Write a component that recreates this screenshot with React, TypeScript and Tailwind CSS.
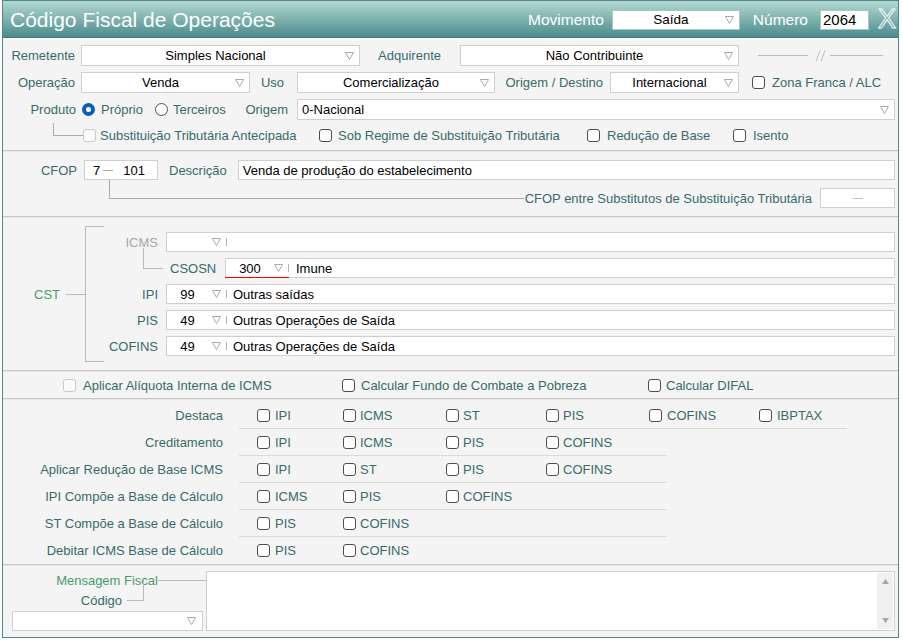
import React from "react";

function Arrow({ className = "" }: { className?: string }) {
  return (
    <svg width="9" height="8" viewBox="0 0 9 8" className={"shrink-0 " + className}>
      <path d="M0.5 0.5 H8.5 L4.5 7.5 Z" fill="none" stroke="#a9a9a9" strokeWidth="1" />
    </svg>
  );
}

function Box({ disabled }: { disabled?: boolean }) {
  return (
    <span
      className={
        disabled
          ? "block w-[13px] h-[13px] shrink-0 rounded-[3px] border border-[#c9c9c9] bg-[#fafafa]"
          : "block w-[13px] h-[13px] shrink-0 rounded-[3px] border border-[#4d4d4d] bg-white"
      }
    />
  );
}

function Radio({ on }: { on?: boolean }) {
  return on ? (
    <span className="w-[13px] h-[13px] shrink-0 rounded-full bg-[#0a5cc2] flex items-center justify-center">
      <span className="w-[5px] h-[5px] rounded-full bg-white" />
    </span>
  ) : (
    <span className="w-[13px] h-[13px] shrink-0 rounded-full border border-[#505050] bg-white" />
  );
}

function Sel({ w, text }: { w: string; text: string }) {
  return (
    <div className={w + " h-[21px] shrink-0 bg-white border border-[#cfcfcf] flex items-center pl-1 pr-[5px]"}>
      <span className="flex-1 text-center text-black whitespace-nowrap">{text}</span>
      <Arrow />
    </div>
  );
}

function CstField({ code, desc }: { code: string; desc: string }) {
  return (
    <div className="ml-[8px] flex-1 h-[20px] bg-white border border-[#cfcfcf] flex items-center text-black">
      <span className="w-[41px] text-center">{code}</span>
      <Arrow className="ml-[4px]" />
      <span className="ml-[5px] w-px h-[8px] bg-[#b5b5b5]" />
      <span className="ml-[6px]">{desc}</span>
    </div>
  );
}

function Sep() {
  return <div className="h-[2px] shrink-0 border-t border-[#c8c8c8] bg-[#e6e6e6]" />;
}

const rowsE: { label: string; items: string[] }[] = [
  { label: "Destaca", items: ["IPI", "ICMS", "ST", "PIS", "COFINS", "IBPTAX"] },
  { label: "Creditamento", items: ["IPI", "ICMS", "PIS", "COFINS"] },
  { label: "Aplicar Redução de Base ICMS", items: ["IPI", "ST", "PIS", "COFINS"] },
  { label: "IPI Compõe a Base de Cálculo", items: ["ICMS", "PIS", "COFINS"] },
  { label: "ST Compõe a Base de Cálculo", items: ["PIS", "COFINS"] },
  { label: "Debitar ICMS Base de Cálculo", items: ["PIS", "COFINS"] },
];
const cellW = ["w-[86px]", "w-[103px]", "w-[100px]", "w-[103px]", "w-[110px]", "w-[80px]"];
const gapW = ["ml-[5px]", "ml-[4px]", "ml-[4px]", "ml-[4px]", "ml-[5px]", "ml-[5px]"];

export default function App() {
  return (
    <div className="w-[903px] h-[640px] bg-white font-['Liberation_Sans',Arial,sans-serif] text-[13px] leading-none text-[#386a6b]">
      <div className="ml-[2px] w-[897px] h-[638px] border border-[#4f8788] bg-[#f4f4f4] flex flex-col overflow-hidden">
        {/* Header */}
        <div className="h-[37px] shrink-0 border-b border-[#3f7778] bg-[linear-gradient(to_bottom,#b3d8d1,#4b8c8d)] flex items-center pl-[7px] pr-[2px] pt-px">
          <span className="text-[21px] text-white whitespace-nowrap">Código Fiscal de Operações</span>
          <span className="ml-auto text-[15.5px] text-white">Movimento</span>
          <div className="ml-[8px] w-[128px] h-[20px] bg-white border border-[#a9c5c5] flex items-center pl-1 pr-[5px]">
            <span className="flex-1 text-center text-black text-[13.5px]">Saída</span>
            <Arrow />
          </div>
          <span className="ml-[13px] text-[15.5px] text-white">Número</span>
          <div className="ml-[12px] w-[49px] h-[20px] bg-white border border-[#a9c5c5] flex items-center pl-[2px] text-[15px] text-black">
            2064
          </div>
          <span className="ml-[9px] text-[27px] leading-none text-transparent [-webkit-text-stroke:1px_#f2fbf9]">X</span>
        </div>
        <div className="h-px shrink-0 bg-white" />

        {/* Section A */}
        <div className="h-[111px] shrink-0 pt-[3px] flex flex-col">
          <div className="h-[27px] flex items-center">
            <span className="w-[72px] text-right">Remetente</span>
            <Sel w="ml-[6px] w-[279px]" text="Simples Nacional" />
            <span className="w-[81px] text-right">Adquirente</span>
            <Sel w="ml-[19px] w-[279px]" text="Não Contribuinte" />
            <div className="ml-[19px] w-[50px] h-px bg-[#b9b9b9]" />
            <svg className="ml-[7px] shrink-0" width="11" height="12" viewBox="0 0 11 12">
              <path d="M1 11.5 L5 0.5 M6 11.5 L10 0.5" stroke="#bdbdbd" strokeWidth="1" fill="none" />
            </svg>
            <div className="ml-[4px] w-[53px] h-px bg-[#b9b9b9]" />
          </div>
          <div className="h-[27px] flex items-center">
            <span className="w-[72px] text-right">Operação</span>
            <Sel w="ml-[6px] w-[169px]" text="Venda" />
            <span className="w-[34px] text-right">Uso</span>
            <Sel w="ml-[13px] w-[198px]" text="Comercialização" />
            <span className="w-[108px] text-right">Origem / Destino</span>
            <Sel w="ml-[7px] w-[129px]" text="Internacional" />
            <span className="ml-[13px]">
              <Box />
            </span>
            <span className="ml-[7px]">Zona Franca / ALC</span>
          </div>
          <div className="h-[27px] flex items-center pr-[3px]">
            <span className="w-[73px] text-right">Produto</span>
            <div className="ml-[6px] w-[73px] flex items-center">
              <Radio on />
              <span className="ml-[6px]">Próprio</span>
            </div>
            <div className="w-[80px] flex items-center">
              <Radio />
              <span className="ml-[5px]">Terceiros</span>
            </div>
            <span className="w-[53px] text-right">Origem</span>
            <div className="ml-[9px] flex-1 h-[21px] bg-white border border-[#cfcfcf] flex items-center pl-[4px] pr-[5px]">
              <span className="flex-1 text-black">0-Nacional</span>
              <Arrow />
            </div>
          </div>
          <div className="h-[25px] flex items-center">
            <div className="ml-[50px] w-[30px] h-[13px] self-start border-l border-b border-[#a9a9a9]" />
            <div className="w-[236px] flex items-center">
              <Box disabled />
              <span className="ml-[4px] whitespace-nowrap">Substituição Tributária Antecipada</span>
            </div>
            <div className="w-[268px] flex items-center">
              <Box />
              <span className="ml-[6px] whitespace-nowrap">Sob Regime de Substituição Tributária</span>
            </div>
            <div className="w-[146px] flex items-center">
              <Box />
              <span className="ml-[7px]">Redução de Base</span>
            </div>
            <div className="flex items-center">
              <Box />
              <span className="ml-[7px]">Isento</span>
            </div>
          </div>
        </div>
        <Sep />

        {/* Section B */}
        <div className="h-[64px] shrink-0 pt-[5px] flex flex-col">
          <div className="h-[26px] flex items-center pr-[3px]">
            <span className="w-[74px] text-right">CFOP</span>
            <div className="ml-[7px] w-[74px] h-[20px] bg-white border border-[#cfcfcf] flex items-center pl-[8px] text-black">
              <span>7</span>
              <span className="ml-[3px] w-[10px] h-px bg-[#b0b0b0]" />
              <span className="ml-[10px]">101</span>
            </div>
            <span className="ml-[11px]">Descrição</span>
            <div className="ml-[11px] flex-1 h-[20px] bg-white border border-[#cfcfcf] flex items-center pl-[4px] text-black">
              Venda de produção do estabelecimento
            </div>
          </div>
          <div className="h-[30px] flex items-center pr-[3px]">
            <div className="ml-[106px] flex-1 self-start -mt-[3px] h-[19px] border-l border-b border-[#a9a9a9]" />
            <span className="ml-px whitespace-nowrap">CFOP entre Substitutos de Substituição Tributária</span>
            <div className="ml-[8px] w-[75px] h-[20px] bg-white border border-[#cfcfcf] flex items-center justify-center">
              <span className="w-[10px] h-px bg-[#c4c4c4]" />
            </div>
          </div>
        </div>
        <Sep />

        {/* Section C - CST */}
        <div className="h-[152px] shrink-0 flex items-center pr-[3px]">
          <span className="w-[57px] text-right text-[#4c9a6a]">CST</span>
          <div className="ml-[6px] w-[19px] h-px bg-[#b9b9b9]" />
          <div className="w-[19px] h-[136px] border-l border-y border-[#b9b9b9]" />
          <div className="flex-1 flex flex-col">
            <div className="h-[26px] flex items-center">
              <span className="w-[54px] text-right text-[#a6a6a6]">ICMS</span>
              <CstField code="" desc="" />
            </div>
            <div className="h-[26px] flex items-center">
              <div className="ml-[39px] w-[20px] h-[21px] self-start -mt-[7px] border-l border-b border-[#b9b9b9]" />
              <span className="ml-[7px] w-[47px]">CSOSN</span>
              <div className="ml-[8px] flex-1 h-[20px] bg-white border border-[#cfcfcf] flex items-center text-black">
                <div className="relative self-stretch flex items-center">
                  <span className="w-[48px] text-center">300</span>
                  <Arrow />
                  <span className="ml-[5px] w-px h-[8px] bg-[#b5b5b5]" />
                  <span className="absolute left-[-1px] right-0 bottom-[-1px] h-px bg-[#ff0000]" />
                </div>
                <span className="ml-[7px]">Imune</span>
              </div>
            </div>
            <div className="h-[26px] flex items-center">
              <span className="w-[54px] text-right">IPI</span>
              <CstField code="99" desc="Outras saídas" />
            </div>
            <div className="h-[26px] flex items-center">
              <span className="w-[54px] text-right">PIS</span>
              <CstField code="49" desc="Outras Operações de Saída" />
            </div>
            <div className="h-[26px] flex items-center">
              <span className="w-[54px] text-right">COFINS</span>
              <CstField code="49" desc="Outras Operações de Saída" />
            </div>
          </div>
        </div>
        <Sep />

        {/* Section D */}
        <div className="h-[26px] shrink-0 flex items-center">
          <div className="ml-[60px] w-[279px] flex items-center">
            <Box disabled />
            <span className="ml-[7px]">Aplicar Alíquota Interna de ICMS</span>
          </div>
          <div className="w-[306px] flex items-center">
            <Box />
            <span className="ml-[6px]">Calcular Fundo de Combate a Pobreza</span>
          </div>
          <div className="flex items-center">
            <Box />
            <span className="ml-[5px]">Calcular DIFAL</span>
          </div>
        </div>
        <Sep />

        {/* Section E */}
        <div className="h-[164px] shrink-0 pt-[2px] flex flex-col">
          {rowsE.map((r, i) => (
            <div key={r.label} className={i === 5 ? "h-[26px] flex" : "h-[27px] flex"}>
              <span className="w-[220px] text-right self-center whitespace-nowrap">{r.label}</span>
              <div
                className={
                  i === 0
                    ? "ml-[16px] pl-[18px] w-[608px] flex items-center border-b border-[#dadada]"
                    : i < 5
                    ? "ml-[16px] pl-[18px] w-[428px] flex items-center border-b border-[#dadada]"
                    : "ml-[16px] pl-[18px] w-[428px] flex items-center"
                }
              >
                {r.items.map((it, j) => (
                  <div key={it} className={cellW[j] + " flex items-center shrink-0"}>
                    <Box />
                    <span className={gapW[j]}>{it}</span>
                  </div>
                ))}
              </div>
            </div>
          ))}
        </div>
        <Sep />

        {/* Section F */}
        <div className="h-[71px] shrink-0 flex pt-[5px] pr-[3px]">
          <div className="w-[203px] shrink-0 flex flex-col">
            <div className="h-[18px] flex items-center">
              <span className="w-[155px] text-right text-[#4c9a6a] whitespace-nowrap">Mensagem Fiscal</span>
              <span className="flex-1 h-px bg-[#b9b9b9]" />
            </div>
            <div className="h-[22px] flex items-center">
              <span className="w-[119px] text-right">Código</span>
              <span className="ml-[5px] w-[17px] h-[21px] self-start -mt-[9px] border-r border-b border-[#b9b9b9]" />
            </div>
            <div className="ml-[9px] w-[191px] h-[20px] bg-white border border-[#cfcfcf] flex items-center justify-end pr-[6px]">
              <Arrow />
            </div>
          </div>
          <div className="flex-1 h-[60px] bg-white border border-[#cfcfcf] flex justify-end">
            <div className="w-[16px] my-px mr-px bg-[#f0f0f0] flex flex-col items-center justify-between py-[6px]">
              <svg width="7" height="5" viewBox="0 0 7 5">
                <path d="M3.5 0 L7 5 H0 Z" fill="#a6a6a6" />
              </svg>
              <svg width="7" height="5" viewBox="0 0 7 5">
                <path d="M0 0 H7 L3.5 5 Z" fill="#a6a6a6" />
              </svg>
            </div>
          </div>
        </div>
      </div>
    </div>
  );
}
